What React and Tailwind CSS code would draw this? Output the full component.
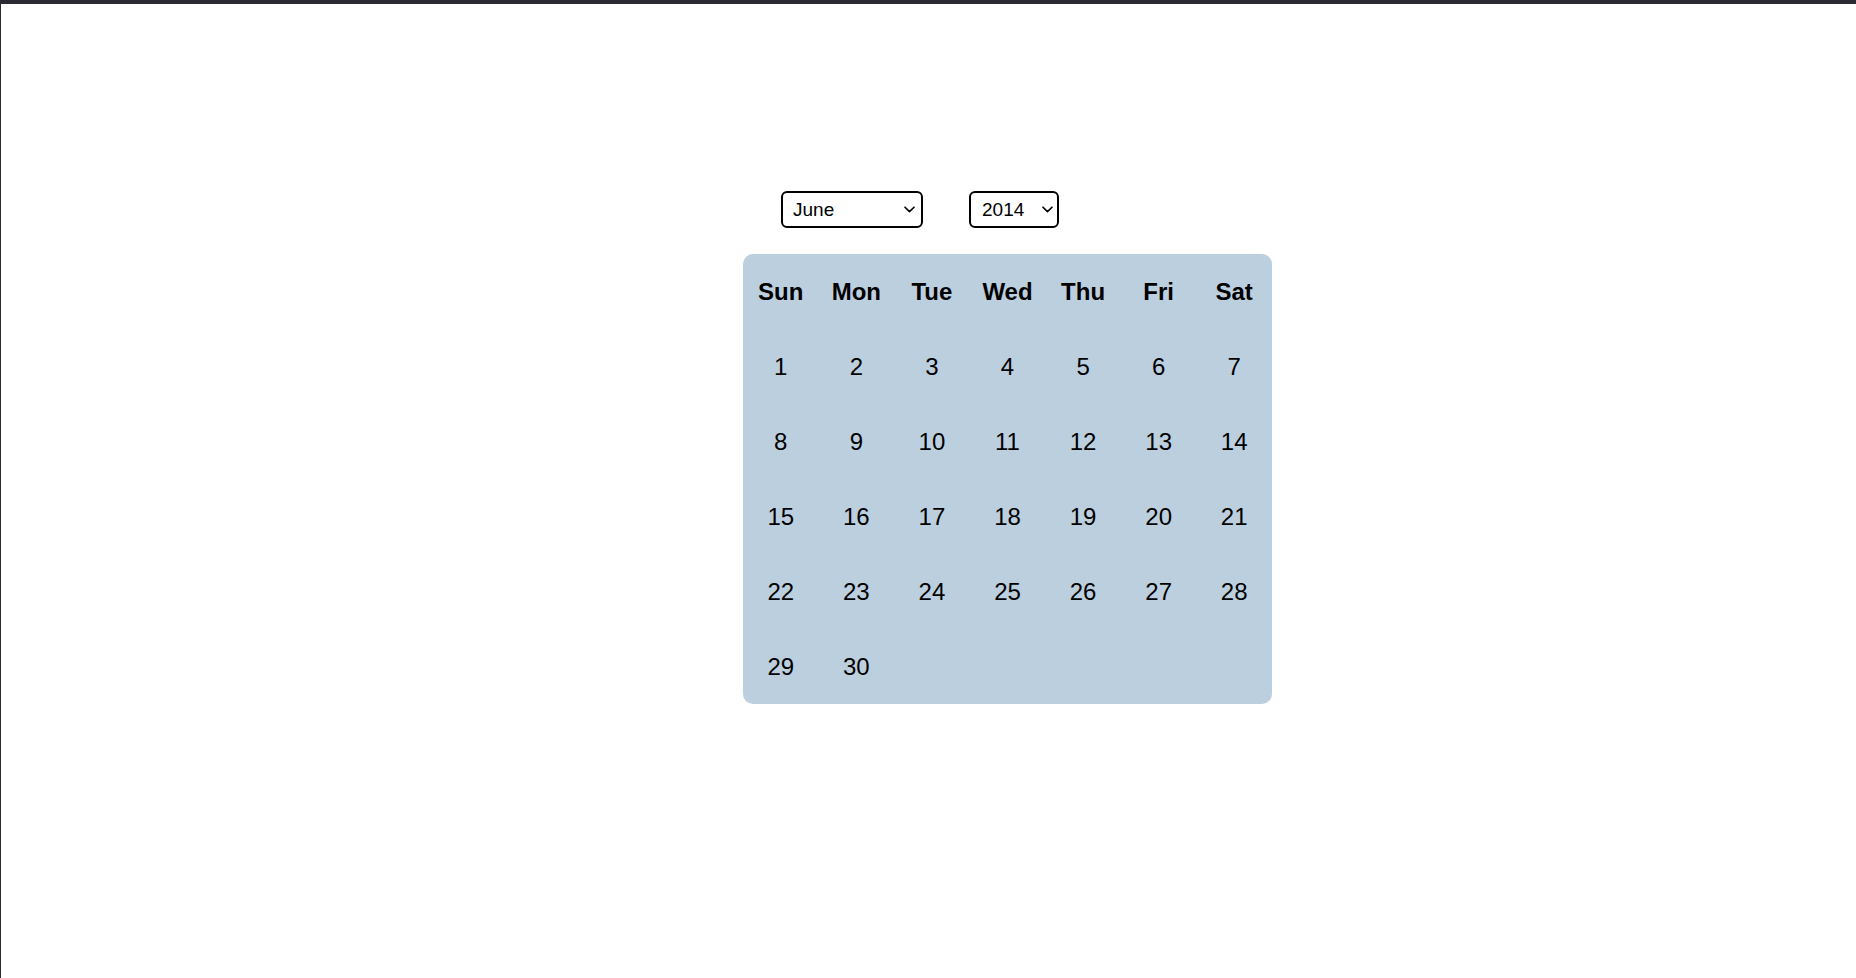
import React from "react";

const days = ["Sun", "Mon", "Tue", "Wed", "Thu", "Fri", "Sat"];

function FakeSelect({ value, options, widthClass, padClass, chevClass }) {
  return (
    <div className={`relative ${widthClass} h-[37px]`}>
      <select
        defaultValue={value}
        className={`appearance-none w-full h-full border-2 border-black rounded-[6px] bg-white text-black text-[19px] pt-[2px] ${padClass} outline-none`}
        style={{ fontFamily: '"Liberation Sans", Arial, sans-serif' }}
      >
        {options.map((o) => (
          <option key={o} value={o}>
            {o}
          </option>
        ))}
      </select>
      <div className={`pointer-events-none absolute top-0 bottom-0 flex items-center ${chevClass}`}>
        <svg width="11" height="7" viewBox="0 0 11 7">
          <path d="M1 1.2 L5.5 5.6 L10 1.2" fill="none" stroke="#000" strokeWidth="1.6" strokeLinecap="round" strokeLinejoin="round" />
        </svg>
      </div>
    </div>
  );
}

export default function App() {
  const months = ["January", "February", "March", "April", "May", "June", "July", "August", "September", "October", "November", "December"];
  const years = ["2010", "2011", "2012", "2013", "2014", "2015", "2016"];
  const cells = [];
  for (let i = 1; i <= 30; i++) cells.push(i);

  return (
    <div className="min-h-screen bg-white border-t-4 border-l border-[#2b2a33]">
      <div className="pt-[187px] pl-[742px]">
        <div className="flex ml-[38px] gap-[46px]">
          <FakeSelect value="June" options={months} widthClass="w-[142px]" padClass="pl-[10px]" chevClass="right-[8px]" />
          <FakeSelect value="2014" options={years} widthClass="w-[90px]" padClass="pl-[11px]" chevClass="right-[6px]" />
        </div>
        <div
          className="mt-[26px] w-[529px] h-[450px] rounded-[10px] bg-[#bccfdf] grid grid-cols-7 grid-rows-6 text-black text-[24px]"
          style={{ fontFamily: '"Liberation Sans", Arial, sans-serif' }}
        >
          {days.map((d) => (
            <div key={d} className="flex items-center justify-center font-bold">
              {d}
            </div>
          ))}
          {cells.map((n) => (
            <div key={n} className="flex items-center justify-center">
              {n}
            </div>
          ))}
        </div>
      </div>
    </div>
  );
}
